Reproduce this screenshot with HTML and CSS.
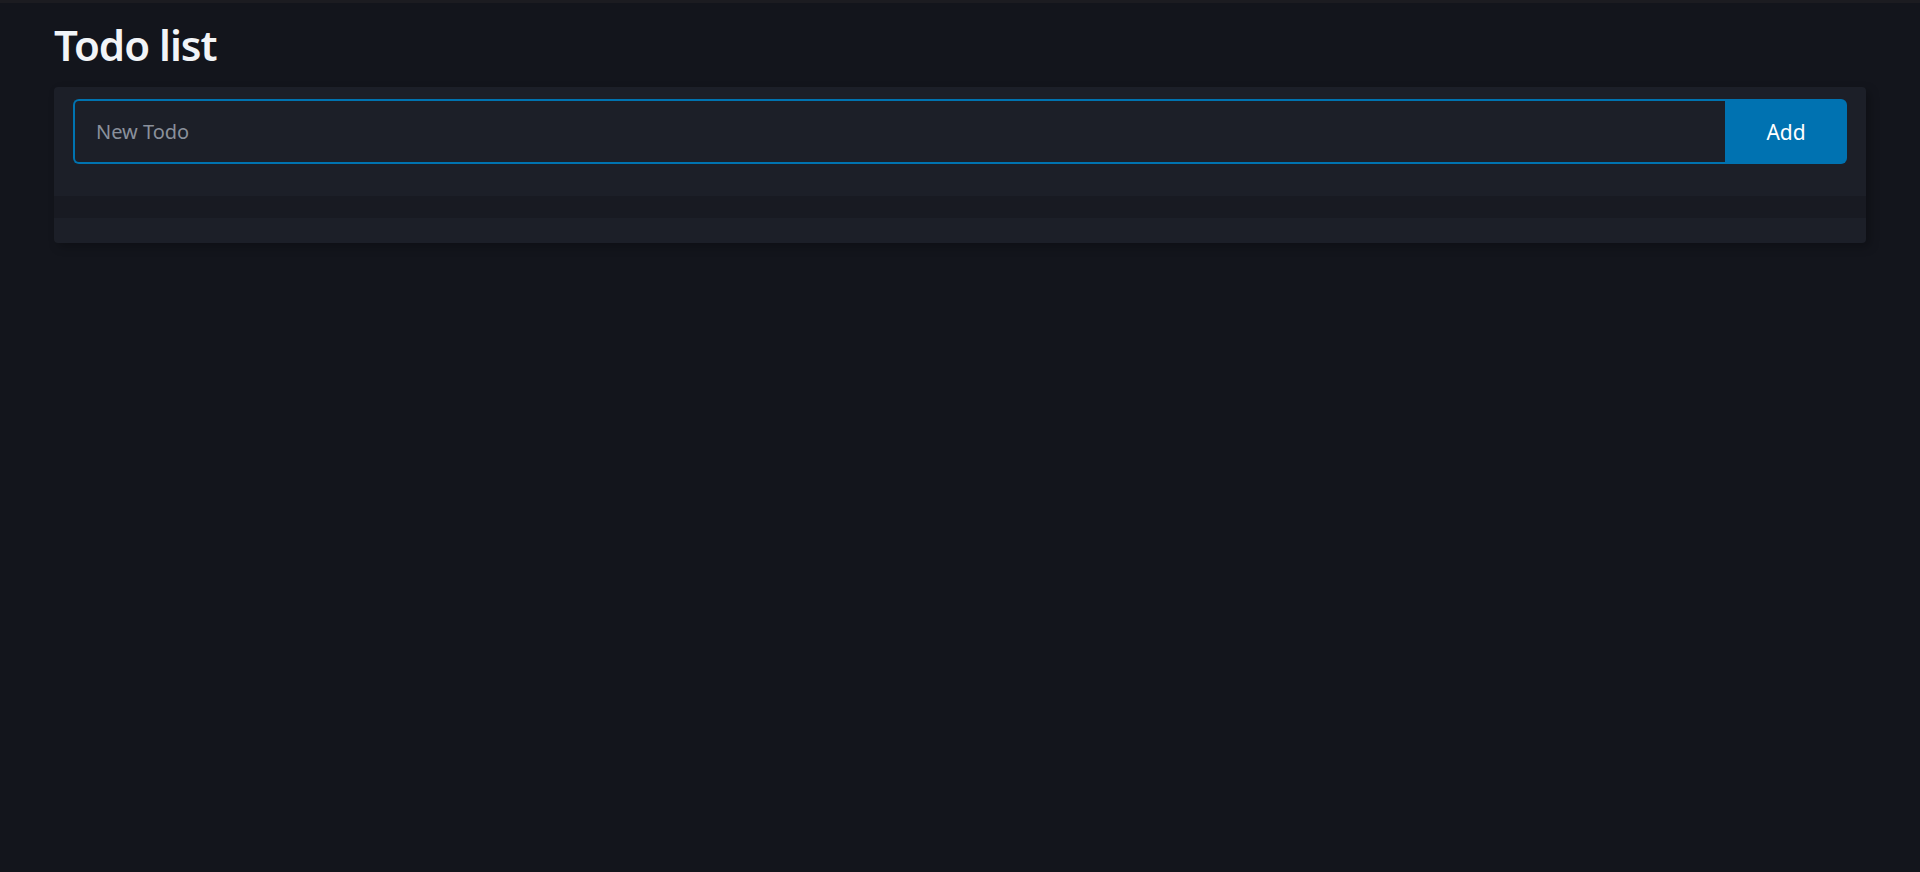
FILE: index.html
```
<!DOCTYPE html>
<html lang="en">
<head>
  <meta charset="UTF-8" />
  <meta name="viewport" content="width=device-width, initial-scale=1.0"/>
  <title>Todo list</title>
  <link rel="stylesheet" href="styles.css">
</head>
<body>
  <div class="app">
    <h1>Todo list</h1>

    <div class="card">
      <form class="todo-form" onsubmit="return false">
        <input type="text" class="todo-input" placeholder="New Todo" autofocus>
        <button type="submit" class="add-btn">Add</button>
      </form>

      <ul class="todo-list">
        <li class="todo-row dark"></li>
        <li class="todo-row"></li>
      </ul>
    </div>
  </div>
</body>
</html>
```

FILE: styles.css
```
* {
  box-sizing: border-box;
}

body {
  margin: 0;
  background: #13151c;
  border-top: 3px solid #1c1c21;
  font-family: 'Noto Sans', 'Open Sans', sans-serif;
  color: #f2f4f7;
  min-height: 100vh;
}

.app {
  padding: 0 54px;
}

h1 {
  margin: 0;
  padding-top: 14px;
  font-size: 42px;
  font-weight: 600;
  line-height: 56px;
  letter-spacing: -1px;
}

.card {
  margin-top: 14px;
  background: #1c1f28;
  border-radius: 4px;
  padding: 12px 19px 0;
  box-shadow: 4px 4px 10px rgba(0, 0, 0, 0.25);
}

.todo-form {
  display: flex;
}

.todo-input {
  flex: 1;
  height: 65px;
  background: #1c1f28;
  border: 2px solid #0073b0;
  border-right: none;
  border-radius: 6px 0 0 6px;
  padding: 0 20px 0 21px;
  font-family: inherit;
  font-size: 20px;
  color: #e6e8ec;
  outline: none;
}

.todo-input::placeholder {
  color: #8a909b;
}

.add-btn {
  width: 122px;
  height: 65px;
  background: #0072b1;
  border: none;
  border-radius: 0 6px 6px 0;
  color: #fff;
  font-family: inherit;
  font-size: 21px;
  cursor: pointer;
}

.todo-list {
  list-style: none;
  margin: 0;
  padding: 32px 0 0;
}

.todo-row {
  height: 25px;
  margin: 0 -19px;
}

.todo-row.dark {
  height: 22px;
  background: #181a22;
}
```
